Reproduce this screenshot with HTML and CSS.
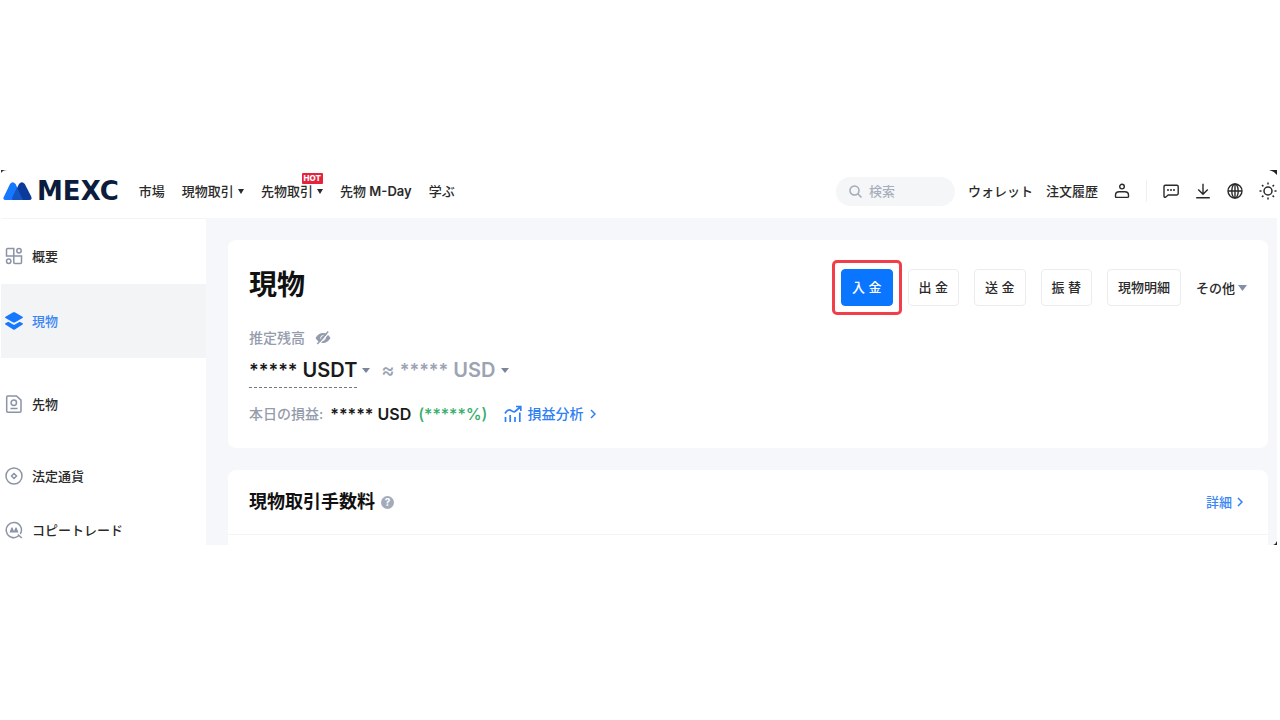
FILE: index.html
```html
<!DOCTYPE html>
<html lang="ja">
<head>
<meta charset="utf-8">
<title>MEXC 現物</title>
<link rel="stylesheet" href="styles.css">
</head>
<body>
<div class="app">
  <svg class="corner corner-tl" width="6" height="3" viewBox="0 0 6 3"><path d="M0 0h6Q2 0 0 3z" fill="#333"/></svg>
  <svg class="corner corner-tr" width="8" height="5" viewBox="0 0 8 5"><path d="M0 0h8v5Q5 1 0 0z" fill="#222"/></svg>
  <svg class="corner corner-br" width="4" height="4" viewBox="0 0 4 4"><path d="M4 0v4H0Q3 3 4 0z" fill="#222"/></svg>

  <header class="header">
    <a class="logo" href="#">
      <svg width="29" height="18" viewBox="0 0 29 18">
        <path d="M1 14.500 7 2Q9.600-1.600 12.600 2L20 18H3Q-1 18 1 14.500z" fill="#1677ff"/>
        <path d="M10 14.500 16 2Q18.800-1.600 21.800 2L28.200 14.500Q29.500 18 26 18H11.500Q8.500 18 10 14.500z" fill="#0b3a9b"/>
        <path d="M10 14.500 14.300 5.700 20 18H11.500Q8.500 18 10 14.500z" fill="#1455c4"/>
      </svg>
      <span class="wordmark">MEXC</span>
    </a>
    <nav class="nav">
      <a href="#">市場</a>
      <button class="menu" type="button">現物取引<svg width="6" height="5" viewBox="0 0 6 5"><path d="M0 0h6L3 5z" fill="currentColor"/></svg></button>
      <button class="menu" type="button">先物取引<svg width="6" height="5" viewBox="0 0 6 5"><path d="M0 0h6L3 5z" fill="currentColor"/></svg><span class="hot">HOT</span></button>
      <a href="#">先物 <b>M-Day</b></a>
      <a href="#">学ぶ</a>
    </nav>
    <div class="tools">
      <div class="links">
        <label class="search">
          <svg width="13" height="13" viewBox="0 0 13 13" fill="none" stroke="#a3a9b8" stroke-width="1.500"><circle cx="5.500" cy="5.500" r="4.500"/><path d="m9 9 3.500 3.500"/></svg>
          <input type="text" placeholder="検索" aria-label="検索">
        </label>
        <a href="#">ウォレット</a>
        <a href="#">注文履歴</a>
      </div>
      <button class="icon" type="button" aria-label="アカウント"><svg width="16" height="16" viewBox="0 0 16 16" fill="none" stroke="currentColor" stroke-width="1.400"><circle cx="8" cy="3.600" r="2.300"/><path d="M1.500 12.200c0-2.200 1.500-3.400 3.700-3.400h5.600c2.200 0 3.700 1.200 3.700 3.400v1.200q0 1-1 1h-11q-1 0-1-1z"/></svg></button>
      <span class="divider"></span>
      <button class="icon" type="button" aria-label="チャット"><svg width="16" height="16" viewBox="0 0 16 16" fill="none" stroke="currentColor" stroke-width="1.400"><path d="M2.200 2.200h11.600q1.400 0 1.400 1.400v7q0 1.400-1.400 1.400H5.200l-2.600 2.200q-1.600.4-1.600-1.200V3.600q0-1.400 1.200-1.400z"/><path d="M4 7h2M7 7h2M10 7h2" stroke-width="1.700"/></svg></button>
      <button class="icon" type="button" aria-label="ダウンロード"><svg width="16" height="16" viewBox="0 0 16 16" fill="none" stroke="currentColor" stroke-width="1.400"><path d="M8 .8v10.400M3.200 6.600 8 11.300l4.800-4.700M1.200 14.800h13.600"/></svg></button>
      <button class="icon" type="button" aria-label="言語"><svg width="16" height="16" viewBox="0 0 16 16" fill="none" stroke="currentColor" stroke-width="1.400"><circle cx="8" cy="8" r="7"/><ellipse cx="8" cy="8" rx="3.200" ry="7"/><path d="M1 8h14M8 1v14"/></svg></button>
      <button class="icon" type="button" aria-label="テーマ"><svg width="18" height="18" viewBox="0 0 18 18" fill="none" stroke="currentColor" stroke-width="1.500"><circle cx="9" cy="9" r="4"/><path d="M9 .5v2M9 15.500v2M.5 9h2M15.500 9h2M3 3l1.400 1.400M13.600 13.600 15 15M15 3l-1.400 1.400M4.400 13.600 3 15"/></svg></button>
    </div>
  </header>

  <div class="body">
    <nav class="sidebar">
      <a class="side-item first" href="#"><svg width="18" height="18" viewBox="0 0 18 18" fill="none" stroke="#8b93a6" stroke-width="1.500"><path d="M2.500 1.500H8.800V9H1.500V2.500q0-1 1-1zM8.800 9H16.500v6.500q0 1-1 1H9.800q-1 0-1-1z"/><circle cx="14" cy="3.800" r="2.200"/><circle cx="3.700" cy="14.200" r="2.200"/></svg>概要</a>
      <a class="side-item active" href="#" aria-current="page"><svg width="18" height="18" viewBox="0 0 18 18" fill="#1677ff"><path d="M8.200.3Q9 0 9.800.3L17.500 4.800q.8.700 0 1.300L9.800 10.400Q9 10.800 8.200 10.400L.5 6.100q-.8-.6 0-1.300z"/><path d="M.4 11.200 3.300 9.800 9 13l5.700-3.200 2.900 1.400q.7.700 0 1.300L9.800 17.500q-.8.400-1.600 0L.4 12.500q-.6-.6 0-1.300z"/></svg>現物</a>
      <a class="side-item futures" href="#"><svg width="18" height="18" viewBox="0 0 18 18" fill="none" stroke="#8b93a6" stroke-width="1.500"><path d="M2.800 1H11.500L16 5.200V16q0 1.200-1.200 1.200h-12Q1.700 17.200 1.700 16V2.200Q1.700 1 2.800 1z"/><circle cx="8.800" cy="7.800" r="2.700"/><path d="M5.500 13.500h7"/></svg>先物</a>
      <a class="side-item" href="#"><svg width="18" height="18" viewBox="0 0 18 18" fill="none" stroke="#8b93a6" stroke-width="1.500"><circle cx="9" cy="9" r="8"/><path d="M9 6.500 11.500 9 9 11.500 6.500 9z"/></svg>法定通貨</a>
      <a class="side-item last" href="#"><svg width="18" height="18" viewBox="0 0 18 18" fill="none" stroke="#8b93a6" stroke-width="1.500"><path d="M13.500 15A7.600 7.600 0 1 1 15.300 13M12.800 13.500l4 3.500"/><path d="M4.500 11.500 6.400 6.800Q7 5.800 7.600 6.800L9 10.200 10.400 6.800Q11 5.800 11.600 6.800L13.500 11.500z" fill="#8b93a6" stroke="none"/></svg>コピートレード</a>
    </nav>

    <main class="main">
      <section class="card balance">
        <div class="card-head">
          <h1>現物</h1>
          <div class="actions">
            <span class="marked"><button class="btn primary" type="button">入 金</button></span>
            <button class="btn" type="button">出 金</button>
            <button class="btn" type="button">送 金</button>
            <button class="btn" type="button">振 替</button>
            <button class="btn" type="button">現物明細</button>
            <button class="more" type="button">その他<svg width="9" height="6" viewBox="0 0 9 6"><path d="M0 0h9L4.500 6z" fill="#8390aa"/></svg></button>
          </div>
        </div>
        <div class="label">推定残高
          <button class="icon" type="button" aria-label="残高を表示"><svg width="16" height="14" viewBox="0 0 16 14"><path d="M.5 7Q3.500 2 8 2t7.500 5Q12.500 12 8 12T.5 7z" fill="#939bad"/><circle cx="8" cy="7" r="2.300" fill="none" stroke="#fff" stroke-width="1"/><path d="M3.300 14.200 14.300 1.500" stroke="#fff" stroke-width="1.200"/><path d="M2.300 13 13.200 .5" stroke="#939bad" stroke-width="1.500"/></svg></button>
        </div>
        <div class="amounts">
          <span class="total"><span class="stars">*****</span> USDT</span>
          <svg class="caret" width="8" height="5" viewBox="0 0 8 5"><path d="M0 0h8L4 5z" fill="#7b8499"/></svg>
          <span class="approx">≈</span>
          <span class="fiat"><span class="stars">*****</span> USD</span>
          <svg class="caret" width="8" height="5" viewBox="0 0 8 5"><path d="M0 0h8L4 5z" fill="#7b8499"/></svg>
        </div>
        <div class="pnl">
          <span class="pnl-label">本日の損益:</span>
          <span class="pnl-value">***** USD</span>
          <span class="pnl-rate">(*****%)</span>
          <a class="analysis" href="#"><svg width="18" height="18" viewBox="0 0 18 18" fill="none" stroke="#2f80f5" stroke-width="1.700"><path d="M1.500 17v-5M6.200 17V10M11 17v-5M15.800 17V7.500M1 8.500Q4 3.500 7 5.500T11 6.500L16.300 2M12 1.500h4.800V6"/></svg>損益分析<svg width="6" height="10" viewBox="0 0 6 10" fill="none" stroke="#2f80f5" stroke-width="1.500"><path d="m1 1 4 4-4 4"/></svg></a>
        </div>
      </section>
      <section class="card fees">
        <div class="fees-head">
          <h2>現物取引手数料</h2>
          <button class="help" type="button" aria-label="ヘルプ">?</button>
          <a class="detail" href="#">詳細<svg width="6" height="10" viewBox="0 0 6 10" fill="none" stroke="#2f80f5" stroke-width="1.500"><path d="m1 1 4 4-4 4"/></svg></a>
        </div>
      </section>
    </main>
  </div>
</div>
</body>
</html>
```
FILE: styles.css
```css
* { box-sizing: border-box; }
body {
  margin: 0;
  background: #fff;
  color: #2a2a2a;
  font: 500 13px/20px Inter, "Noto Sans CJK JP", sans-serif;
}
a { color: inherit; text-decoration: none; }
button {
  padding: 0;
  border: 0;
  background: none;
  color: inherit;
  font: inherit;
  white-space: nowrap;
}
svg { display: block; flex: none; }
h1, h2 { margin: 0; color: #111; }

.app {
  position: relative;
  display: flex;
  flex-direction: column;
  margin: 170px 3px 0 1px;
}
.corner { position: absolute; }
.corner-tl { top: 0; left: 0; }
.corner-tr { top: 0; right: 0; }
.corner-br { bottom: 0; right: 0; }

.header {
  display: flex;
  align-items: center;
  height: 48px;
  padding: 0 0 6px 2px;
  white-space: nowrap;
}
.logo { display: flex; align-items: center; gap: 5px; }
.wordmark {
  color: #0c1c3c;
  font: bold 26px/28px "DejaVu Sans", sans-serif;
}
.nav { display: flex; gap: 17px; margin-left: 20px; }
.nav b { font-weight: 600; }
.menu { position: relative; display: flex; align-items: center; gap: 4px; }
.hot {
  position: absolute;
  top: -8px;
  right: 0;
  padding: 0 2px;
  border-radius: 1px;
  background: #e5233d;
  color: #fff;
  font: 800 8px/11px Inter, sans-serif;
}
.tools { display: flex; align-items: center; gap: 16px; margin-left: auto; }
.links { display: flex; align-items: center; gap: 13px; }
.search {
  display: flex;
  align-items: center;
  gap: 7px;
  width: 119px;
  height: 29px;
  padding: 0 13px;
  border-radius: 15px;
  background: #f5f6f8;
}
.search input {
  width: 100%;
  min-width: 0;
  padding: 0;
  border: 0;
  outline: 0;
  background: none;
  font: inherit;
}
.search input::placeholder { color: #a8aebd; opacity: 1; }
.icon { display: inline-flex; }
.divider { width: 1px; height: 22px; background: #eff0f3; }

.body { display: flex; }
.sidebar {
  flex: none;
  width: 205px;
  border-top: 1px solid #f3f4f6;
}
.side-item {
  display: flex;
  align-items: center;
  gap: 9px;
  height: 54px;
  padding-left: 4px;
}
.side-item.first { height: 65px; padding-top: 9px; }
.side-item.active { height: 74px; background: #f3f4f6; color: #3b86f5; }
.side-item.futures { height: 91px; }
.side-item.last { align-items: flex-start; height: 42px; padding-top: 18px; line-height: 18px; }

.main {
  display: flex;
  flex: 1;
  flex-direction: column;
  gap: 22px;
  min-width: 0;
  padding: 22px 9px 0 22px;
  background: #f5f7fa;
}
.card { padding: 0 21px; border-radius: 8px; background: #fff; }
.balance { padding-top: 29px; padding-bottom: 22px; }
.card-head { display: flex; justify-content: space-between; align-items: flex-start; }
h1 { font-size: 28px; font-weight: 700; line-height: 32px; }
.actions { display: flex; align-items: center; gap: 15px; }
.btn {
  height: 37px;
  padding: 0 10px 1px;
  border: 1px solid #ebecef;
  border-radius: 4px;
}
.primary { border-color: #0a76ff; background: #0a76ff; color: #fff; }
.marked { position: relative; display: flex; }
.marked::after {
  position: absolute;
  inset: -9px;
  border: 3px solid #f23e49;
  border-radius: 5px;
  content: "";
  pointer-events: none;
}
.more { display: flex; align-items: center; gap: 3px; }

.label {
  display: flex;
  align-items: center;
  gap: 10px;
  margin-top: 22px;
  color: #959cac;
  font-size: 14px;
}
.amounts {
  display: flex;
  align-items: flex-start;
  margin-top: 8px;
  color: #9ca3b3;
  font-size: 20px;
  line-height: 28px;
  white-space: nowrap;
}
.total {
  padding-bottom: 3px;
  border-bottom: 1px dashed #777;
  color: #1a1a1a;
  font-weight: 600;
}
.fiat { font-weight: 600; }
.stars { font-size: 18px; line-height: 20px; }
.caret { margin: 12px 11px 0 5px; }
.approx { margin-right: 5px; }
.pnl {
  display: flex;
  align-items: center;
  gap: 7px;
  margin-top: 14px;
  font-size: 16px;
  line-height: 24px;
  white-space: nowrap;
}
.pnl-label { color: #959cac; font-size: 14px; }
.pnl-value { color: #1a1a1a; font-weight: 600; }
.pnl-rate { color: #36ae68; }
.analysis {
  display: flex;
  align-items: center;
  gap: 6px;
  margin-left: 9px;
  color: #2f80f5;
  font-size: 14px;
}

.fees { height: 75px; padding: 0; border-radius: 8px 8px 0 0; }
.fees-head {
  display: flex;
  align-items: center;
  height: 65px;
  padding: 0 25px 0 21px;
  border-bottom: 1px solid #f2f3f5;
}
h2 { font-size: 18px; font-weight: 700; line-height: 24px; }
.help {
  width: 13px;
  height: 13px;
  margin-left: 6px;
  border-radius: 50%;
  background: #a3abbb;
  color: #fff;
  font: 700 10px/13px Inter, sans-serif;
}
.detail { display: flex; align-items: center; gap: 5px; margin-left: auto; color: #3b86f5; }
```
